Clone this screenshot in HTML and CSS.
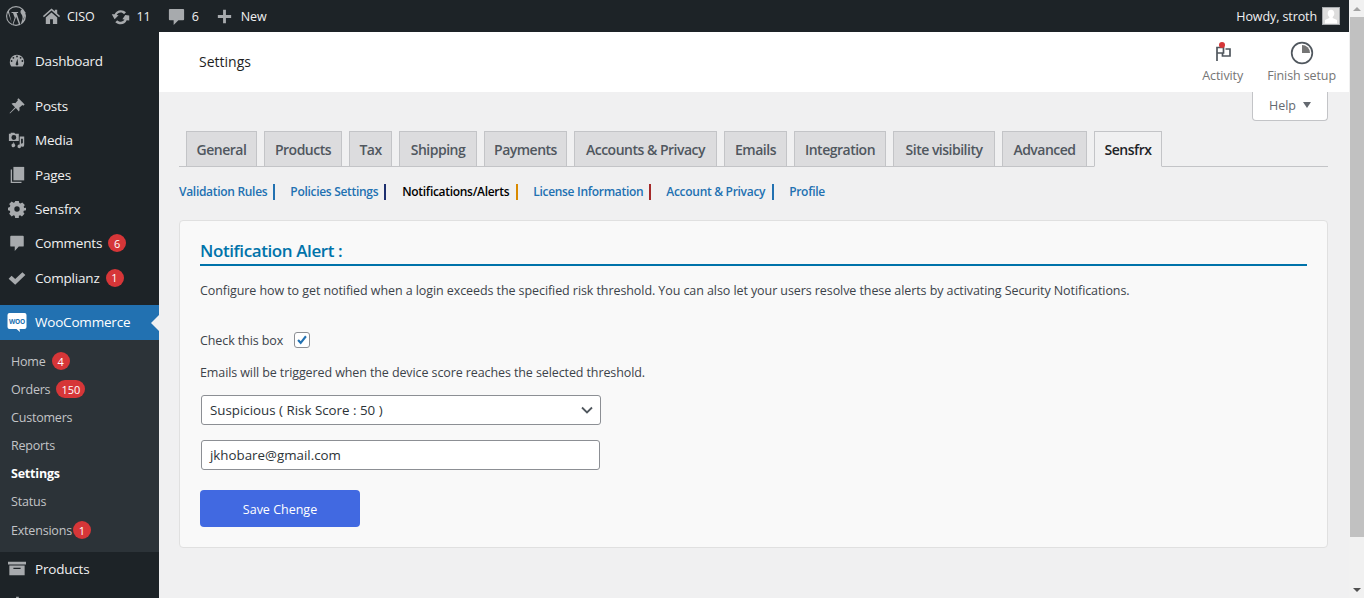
FILE: index.html
```html
<!DOCTYPE html>
<html lang="en">
<head>
<meta charset="utf-8">
<title>Settings</title>
<link rel="stylesheet" href="styles.css">
</head>
<body>
<div class="page">
  <div class="viewport">
    <header class="adminbar">
      <div class="ab-left">
        <svg class="ab-wp" viewBox="0 0 20 20"><path d="M10 0a10 10 0 1 0 0 20 10 10 0 0 0 0-20zm0 1.200a8.800 8.800 0 0 1 5.970 2.330 2.200 2.200 0 0 0-1.500 2.100c0 1 .55 1.800 1.150 2.800.45.75.95 1.750.95 3.200 0 1-.35 2.100-.85 3.650l-1.100 3.700-4.050-12c.67-.04 1.280-.1 1.280-.1.6-.08.53-.96-.07-.92 0 0-1.800.14-2.960.14-1.100 0-2.940-.14-2.940-.14-.6-.04-.67.88-.07.92 0 0 .57.06 1.170.1l1.740 4.770-2.440 7.330L2.900 5.200C3 5.100 3.900 3.700 4.100 3.500A8.800 8.800 0 0 1 10 1.200zM1.200 10c0-1.270.27-2.480.76-3.580l4.200 11.500A8.800 8.800 0 0 1 1.200 10zm8.950.8l2.620 7.200.06.12a8.800 8.800 0 0 1-5.400.14l2.720-7.460zm7.500-4.900a8.800 8.800 0 0 1-.65 8.600l-.2.3 2.200-6.400c.4-1 .55-1.800.55-2.500z"/></svg>
        <span class="ab-item"><svg class="ab-ico" viewBox="0 0 20 20"><path d="M10 1.500l3.500 3.100V3H16v3.800L19 9.500l-1 1.200L10 3.700 2 10.700 1 9.500zM4 11l6-5.200 6 5.200v7h-4.500v-5h-3v5H4z"/></svg>CISO</span>
        <span class="ab-item"><svg class="ab-ico ab-ico-up" viewBox="0 0 20 20"><path d="M10.200 3.300c-2.900 0-5.400 1.800-6.400 4.400L.8 7.500l3 5.500 4.200-4.300-2.100-.3c.8-1.500 2.400-2.500 4.200-2.500 1.400 0 2.700.6 3.600 1.600l2.100-2.100c-1.500-1.300-3.400-2.100-5.600-2.100zm9 5.700l-4.200-.5-3 4.500 2.200.2c-.8 1.400-2.300 2.300-4 2.300-1.400 0-2.700-.6-3.600-1.600l-2.100 2.100c1.500 1.300 3.500 2.200 5.700 2.200 2.900 0 5.300-1.800 6.300-4.300l2.700.3z"/></svg>11</span>
        <span class="ab-item"><svg class="ab-ico ab-ico-cm" viewBox="0 0 20 20"><path d="M3 2h14a1 1 0 0 1 1 1v10a1 1 0 0 1-1 1h-5l-5 5v-5H3a1 1 0 0 1-1-1V3a1 1 0 0 1 1-1z"/></svg>6</span>
        <span class="ab-item"><svg class="ab-ico ab-ico-new" viewBox="0 0 20 20"><path d="M8.500 3h3v5.500H17v3h-5.500V17h-3v-5.500H3v-3h5.500z"/></svg>New</span>
      </div>
      <div class="ab-right">Howdy, stroth
        <svg class="ab-avatar" viewBox="0 0 18 18"><rect width="18" height="18" fill="#ddd"/><rect x=".5" y=".5" width="17" height="17" fill="none" stroke="#a7aaad"/><path fill="#fff" d="M9 2.800c2 0 3.300 1.700 3.300 3.800 0 1.500-.7 2.700-1.600 3.400v1l4.300 2v3.400H3v-3.400l4.300-2v-1c-.9-.7-1.600-1.900-1.600-3.400C5.700 4.500 7 2.800 9 2.800z"/></svg>
      </div>
    </header>
    <div class="below">
      <nav class="sidebar">
        <a class="menu first"><svg class="mi" viewBox="0 0 20 20"><path d="M3.760 16h12.480A8 8 0 0 0 18 11a8 8 0 0 0-16 0c0 1.900.66 3.630 1.760 5zM10 4a1 1 0 1 1 0 2 1 1 0 0 1 0-2zM6 5.500a1 1 0 1 1 0 2 1 1 0 0 1 0-2zm8 0a1 1 0 1 1 0 2 1 1 0 0 1 0-2zM4 9a1 1 0 1 1 0 2 1 1 0 0 1 0-2zm12 0a1 1 0 1 1 0 2 1 1 0 0 1 0-2zm-5.500-1.500l.8 5.200a1.500 1.500 0 1 1-2.600 0z"/></svg>Dashboard</a>
        <a class="menu gap"><svg class="mi" viewBox="0 0 20 20"><path d="M11.700 1.500l6.800 6.800-1.500 1.300-1-.6-3.500 2.900c.6 1.600.4 3.100-.4 4.200L8.700 12.200l-6.500 6-.4-.4 6-6.500-3.900-3.900c1.100-.8 2.600-1 4.200-.4l2.900-3.500-.6-1z"/></svg>Posts</a>
        <a class="menu"><svg class="mi" viewBox="0 0 20 20"><path fill-rule="evenodd" d="M1 3h2V2h4l1 1h4v8H1zm5.500 1.500a2.700 2.700 0 1 0 0 5.400 2.700 2.700 0 0 0 0-5.400z"/><path d="M13 6h5v9.500a2 2 0 1 1-1.500-1.900V8.500h-2V17a2 2 0 1 1-1.500-1.900zM6 12l1.500 2.800A2 2 0 1 1 6 14z"/></svg>Media</a>
        <a class="menu"><svg class="mi" viewBox="0 0 20 20"><path d="M6 1h12v15H6z"/><path d="M3 4v15h12v-1.500H4.500V4z"/></svg>Pages</a>
        <a class="menu"><svg class="mi" viewBox="0 0 20 20"><path fill-rule="evenodd" d="M8 1h4l.5 2.400c.5.200 1 .4 1.400.6l2-1.300 2.800 2.800-1.300 2c.2.400.4.900.6 1.400L20 8.500v3l-2.400.5c-.2.500-.4 1-.6 1.400l1.300 2-2.800 2.800-2-1.300c-.4.200-.9.400-1.400.6L12 19.900H8l-.5-2.400c-.5-.2-1-.4-1.400-.6l-2 1.300-2.800-2.800 1.300-2c-.2-.4-.4-.9-.6-1.400L0 11.500v-3l2-.6c.2-.5.4-1 .6-1.400l-1.300-2 2.800-2.800 2 1.300c.4-.2.900-.4 1.400-.6zM10 7a3 3 0 1 0 0 6 3 3 0 0 0 0-6z"/></svg>Sensfrx</a>
        <a class="menu"><svg class="mi" viewBox="0 0 20 20"><path d="M3.500 2h13a1 1 0 0 1 1 1v10a1 1 0 0 1-1 1H12l-4.500 5v-5h-4a1 1 0 0 1-1-1V3a1 1 0 0 1 1-1z"/></svg>Comments<span class="count">6</span></a>
        <a class="menu"><svg class="mi" viewBox="0 0 20 20"><path d="M16 3.500l3.300 3.300L8 17.500.7 10.800 4 7.500l4 3.700z"/></svg>Complianz<span class="count">1</span></a>
        <a class="menu current"><svg class="woo" viewBox="0 0 20 20"><path fill="#fff" d="M2.500 1h15a2 2 0 0 1 2 2v12a2 2 0 0 1-2 2h-5l.5 3-3.500-3h-7a2 2 0 0 1-2-2V3a2 2 0 0 1 2-2z"/><text x="10" y="11.500" class="woo-text">WOO</text></svg>WooCommerce</a>
        <div class="submenu">
          <a class="sub">Home<span class="count">4</span></a>
          <a class="sub">Orders<span class="count">150</span></a>
          <a class="sub">Customers</a>
          <a class="sub">Reports</a>
          <a class="sub sub-on">Settings</a>
          <a class="sub">Status</a>
          <a class="sub sub-last">Extensions<span class="count tight">1</span></a>
        </div>
        <a class="menu lift"><svg class="mi" viewBox="0 0 20 20"><path fill-rule="evenodd" d="M0 2h20v3H0zM1.500 6h17v11h-17zM6 8.500V10h8V8.500z"/></svg>Products</a>
        <a class="menu"><svg class="mi" viewBox="0 0 20 20"><path d="M9 2h3v16H9zM3 9h3v9H3zM15 5h3v13h-3z"/></svg></a>
      </nav>
      <main class="main">
        <div class="topbar">
          <h1 class="page-title">Settings</h1>
          <div class="top-actions">
            <div class="action">
              <span class="flag"><svg class="flag-ico" viewBox="0 0 24 24"><path fill="none" stroke="#50575e" stroke-width="1.700" d="M6 20V6.500h6.500V12H6M14.500 8H19v7h-7.500v-3"/></svg><span class="flag-dot"></span></span>
              Activity
            </div>
            <div class="action">
              <svg class="pie" viewBox="0 0 24 24"><circle cx="12" cy="12" r="10.300" fill="none" stroke="#50575e" stroke-width="1.700"/><path fill="#757575" d="M12 4a8 8 0 0 1 8 8h-8z"/></svg>
              Finish setup
            </div>
          </div>
        </div>
        <div class="content">
          <div class="help-row"><button class="help">Help<span class="help-caret"></span></button></div>
          <div class="tabs">
            <a class="tab">General</a>
            <a class="tab">Products</a>
            <a class="tab">Tax</a>
            <a class="tab">Shipping</a>
            <a class="tab">Payments</a>
            <a class="tab">Accounts &amp; Privacy</a>
            <a class="tab">Emails</a>
            <a class="tab">Integration</a>
            <a class="tab">Site visibility</a>
            <a class="tab">Advanced</a>
            <a class="tab tab-on">Sensfrx</a>
          </div>
          <div class="subnav">
            <a class="sn sn1">Validation Rules</a>
            <a class="sn sn2">Policies Settings</a>
            <a class="sn sn3 sn-on">Notifications/Alerts</a>
            <a class="sn sn4">License Information</a>
            <a class="sn sn5">Account &amp; Privacy</a>
            <a class="sn sn6">Profile</a>
          </div>
          <section class="card">
            <h2 class="card-title">Notification Alert :</h2>
            <p class="desc">Configure how to get notified when a login exceeds the specified risk threshold. You can also let your users resolve these alerts by activating Security Notifications.</p>
            <div class="check-row">Check this box
              <span class="checkbox"><svg viewBox="0 0 16 16"><path fill="none" stroke="#2271b1" stroke-width="2.400" d="M3.500 8l3 3.200 6-7.500"/></svg></span>
            </div>
            <p class="hint">Emails will be triggered when the device score reaches the selected threshold.</p>
            <div class="select">Suspicious ( Risk Score : 50 )
              <svg class="chev" viewBox="0 0 12 8"><path fill="none" stroke="#50575e" stroke-width="1.800" d="M1 1.500l5 5 5-5"/></svg>
            </div>
            <div class="input">jkhobare@gmail.com</div>
            <button class="save">Save Chenge</button>
          </section>
        </div>
      </main>
    </div>
  </div>
  <div class="scrollbar">
    <span class="sb-btn"><span class="arrow-up"></span></span>
    <span class="sb-thumb"></span>
    <span class="sb-track"></span>
    <span class="sb-btn"><span class="arrow-down"></span></span>
  </div>
</div>
</body>
</html>
```
FILE: styles.css
```css
* { box-sizing: border-box; }
html, body { margin: 0; height: 100%; overflow: hidden; }
body { font-family: "Open Sans", "Noto Sans", sans-serif; font-size: 13px; color: #3c434a; background: #f0f0f1; }
.page { display: flex; width: 1364px; height: 598px; overflow: hidden; }
.viewport { flex: 1; min-width: 0; display: flex; flex-direction: column; }
.adminbar { height: 32px; flex: none; background: #1d2327; color: #f0f0f1; display: flex; justify-content: space-between; align-items: center; font-size: 12.500px; letter-spacing: -0.100px; padding: 0 6px; }
.ab-left { display: flex; align-items: center; }
.ab-wp { width: 20px; height: 20px; fill: #a7aaad; margin-right: 16px; }
.ab-item { display: flex; align-items: center; margin-right: 16px; }
.ab-ico { width: 19px; height: 19px; fill: #a7aaad; margin-right: 6px; }
.ab-ico-up { margin-right: 7px; }
.ab-ico-cm { margin-right: 6px; }
.ab-ico-new { margin-right: 7px; }
.ab-right { display: flex; align-items: center; gap: 5px; }
.ab-avatar { width: 18px; height: 18px; margin-right: 3px; }
.below { flex: 1; display: flex; min-height: 0; }
.sidebar { width: 159px; flex: none; background: #1d2327; color: #f0f0f1; padding-top: 12px; overflow: hidden; }
.menu { display: flex; align-items: center; height: 34.300px; padding-left: 8px; font-size: 13.500px; letter-spacing: -0.200px; position: relative; }
.menu.gap { margin-top: 10.700px; }
.mi { width: 18px; height: 18px; fill: #a7aaad; margin-right: 9px; flex: none; }
.woo { width: 20px; height: 20px; margin-right: 8px; flex: none; }
.woo-text { font-size: 6.500px; font-weight: 700; fill: #2271b1; text-anchor: middle; }
.current { background: #2271b1; color: #fff; height: 35px; margin-top: 10.600px; padding-left: 7px; padding-bottom: 1px; }
.current::after { content: ""; position: absolute; right: 0; top: 50%; margin-top: -8px; border: 8px solid transparent; border-right-color: #f0f0f1; border-left-width: 0; }
.lift { padding-bottom: 1.500px; }
.count { display: inline-flex; align-items: center; justify-content: center; min-width: 18px; height: 18px; padding: 0 5px; margin-left: 6px; border-radius: 9px; background: #d63638; color: #fff; font-size: 11px; letter-spacing: 0; }
.count.tight { margin-left: 1px; }
.submenu { background: #2c3338; padding: 7px 0 9px; }
.sub { display: flex; align-items: center; height: 28px; padding-left: 11px; font-size: 12.500px; letter-spacing: -0.200px; color: #c3c4c7; }
.sub-last { padding-top: 2px; }
.sub-on { color: #fff; font-weight: 700; }
.main { flex: 1; min-width: 0; display: flex; flex-direction: column; }
.topbar { height: 60px; background: #fff; flex: none; display: flex; justify-content: space-between; align-items: center; padding-left: 40px; padding-right: 13px; }
.page-title { margin: 0 0 1px; font-size: 14px; font-weight: 500; color: #1e1e1e; }
.top-actions { display: flex; gap: 24px; }
.action { display: flex; flex-direction: column; align-items: center; font-size: 12.500px; letter-spacing: -0.100px; color: #757575; line-height: 17px; }
.flag { position: relative; display: block; width: 24px; height: 24px; margin-bottom: 2px; }
.flag-ico { width: 24px; height: 24px; display: block; }
.flag-dot { position: absolute; top: 1px; left: 8px; width: 6px; height: 6px; border-radius: 50%; background: #d63638; }
.pie { width: 24px; height: 24px; margin-bottom: 2px; }
.content { flex: 1; padding: 0 21px 0 20px; }
.help-row { display: flex; justify-content: flex-end; height: 39px; }
.help { width: 76px; height: 29px; background: #fff; border: 1px solid #c3c4c7; border-top: 0; border-radius: 0 0 4px 4px; color: #646970; font: inherit; font-size: 12.500px; display: flex; align-items: center; justify-content: center; gap: 7px; padding: 0 0 2px; }
.help-caret { border: 4.500px solid transparent; border-top: 6px solid #646970; border-bottom: 0; }
.tabs { display: flex; gap: 7px; padding-left: 7px; border-bottom: 1px solid #c3c4c7; height: 36px; }
.tab { height: 36px; display: flex; align-items: center; justify-content: center; flex: none; background: #dcdcde; border: 1px solid #c3c4c7; font-size: 14px; font-weight: 600; letter-spacing: -0.500px; color: #50575e; }
.tab:nth-child(1) { width: 71px; }
.tab:nth-child(2) { width: 78px; }
.tab:nth-child(3) { width: 43px; }
.tab:nth-child(4) { width: 78px; }
.tab:nth-child(5) { width: 83px; }
.tab:nth-child(6) { width: 143px; }
.tab:nth-child(7) { width: 63px; }
.tab:nth-child(8) { width: 92px; }
.tab:nth-child(9) { width: 102px; }
.tab:nth-child(10) { width: 85px; }
.tab:nth-child(11) { width: 68px; }
.tab-on { background: #f0f0f1; border-bottom-color: #f0f0f1; color: #1d2327; }
.subnav { display: flex; align-items: center; margin-top: 16px; height: 18px; }
.sn { font-size: 12px; font-weight: 600; letter-spacing: -0.300px; color: #2271b1; padding-right: 6px; margin-right: 15px; border-right: 2px solid #2271b1; line-height: 16px; }
.sn2 { border-right-color: #1d2f6f; margin-right: 16px; }
.sn3 { border-right-color: #d98a00; padding-right: 7px; }
.sn4 { border-right-color: #a52a2a; }
.sn5 { border-right-color: #2271b1; padding-right: 7px; }
.sn6 { border-right: 0; }
.sn-on { color: #000; }
.card { margin-top: 19px; height: 328px; background: #f9f9f9; border: 1px solid #e0e0e0; border-radius: 4px; padding: 20px 20px 0; }
.card-title { margin: 0; height: 25px; font-size: 17px; font-weight: 600; letter-spacing: -0.400px; line-height: 20px; color: #0073aa; border-bottom: 2px solid #0073aa; }
.desc { margin: 16px 0 0; font-size: 12.500px; letter-spacing: -0.080px; line-height: 17px; }
.check-row { display: flex; align-items: center; gap: 11px; margin-top: 32px; height: 18px; font-size: 12.500px; letter-spacing: -0.100px; }
.checkbox { width: 16px; height: 16px; border: 1px solid #8c8f94; border-radius: 3px; background: #fff; display: block; }
.checkbox svg { display: block; width: 14px; height: 14px; }
.hint { margin: 15px 0 0; font-size: 12.500px; letter-spacing: -0.100px; line-height: 17px; }
.select { display: flex; align-items: center; justify-content: space-between; width: 400px; height: 30px; margin: 14px 0 0 1px; padding: 0 7px 0 8px; border: 1px solid #8c8f94; border-radius: 3px; background: #fff; font-size: 13.333px; color: #2c3338; }
.chev { width: 12px; height: 8px; }
.input { display: flex; align-items: center; width: 399px; height: 30px; margin: 15px 0 0 1px; padding: 0 8px; border: 1px solid #8c8f94; border-radius: 3px; background: #fff; font-size: 13.333px; color: #2c3338; }
.save { display: block; width: 160px; height: 37px; margin-top: 20px; padding: 1px 0 0; background: #4169e1; border: 0; border-radius: 4px; color: #fff; font: inherit; font-size: 12.500px; }
.scrollbar { width: 15px; flex: none; background: #f1f1f1; display: flex; flex-direction: column; }
.sb-btn { height: 17px; flex: none; display: flex; align-items: center; justify-content: center; }
.sb-thumb { height: 520px; flex: none; background: #c1c1c1; margin-left: 1px; }
.sb-track { flex: 1; }
.arrow-up { border: 4px solid transparent; border-bottom: 4px solid #a3a3a3; border-top: 0; }
.arrow-down { border: 4px solid transparent; border-top: 4px solid #505050; border-bottom: 0; }
```
